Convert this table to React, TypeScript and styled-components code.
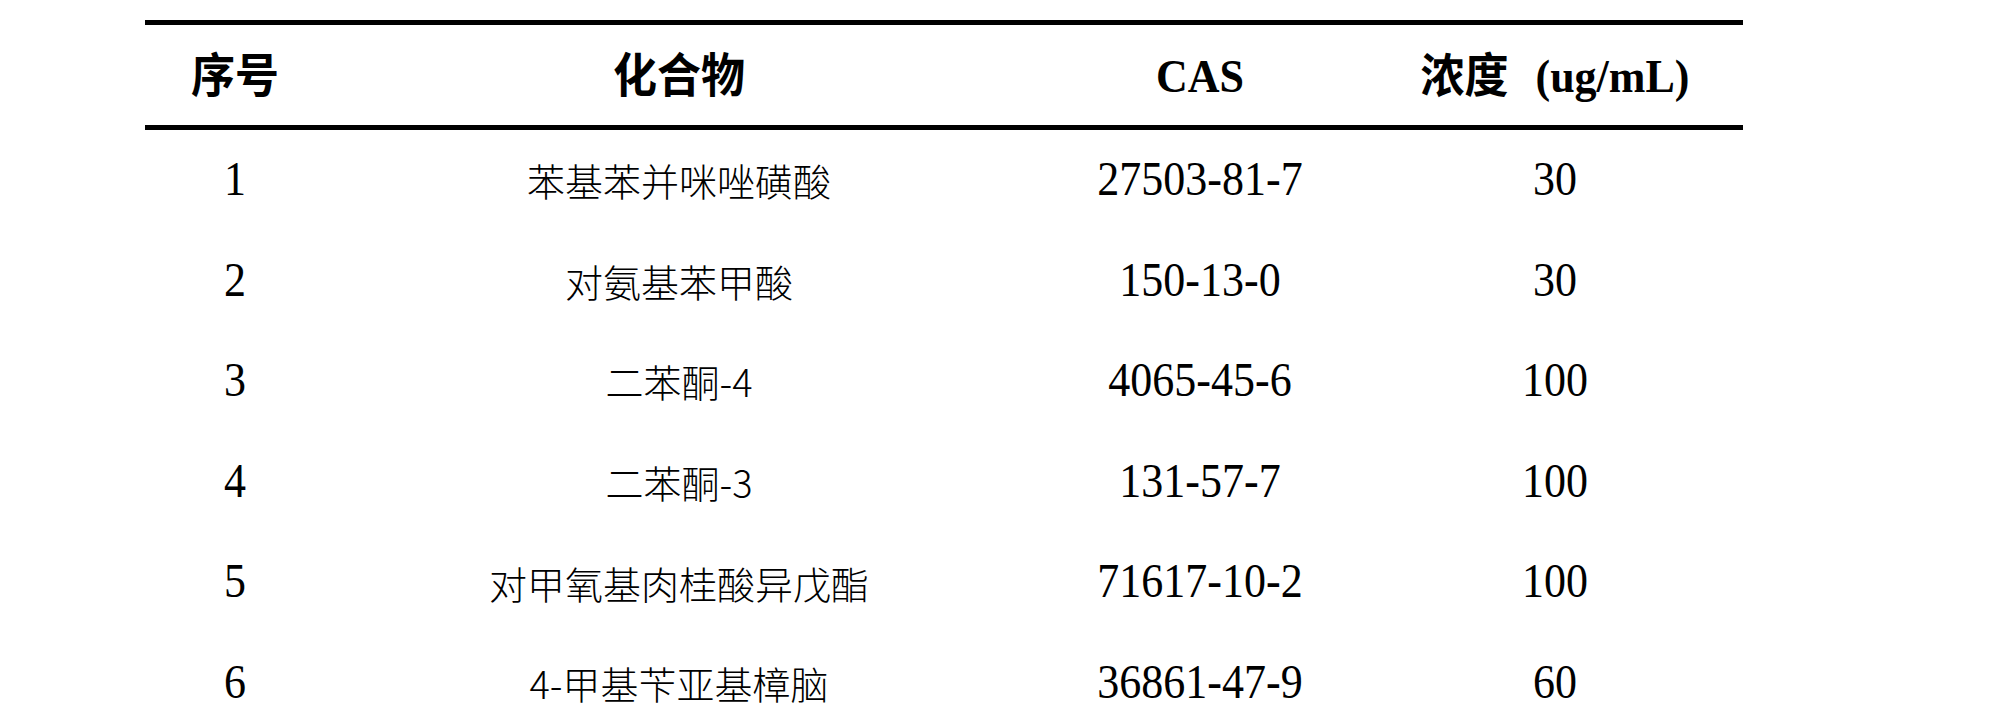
import React from 'react'
import styled, { createGlobalStyle } from 'styled-components'

const GlobalStyle = createGlobalStyle`
  html, body {
    margin: 0;
    padding: 0;
    background: #ffffff;
  }
  body {
    font-family: "Liberation Serif", "Noto Sans CJK SC", serif;
    color: #000000;
  }
`

const COLUMNS = '180px 708px 334px 376px'

const compounds = [
  { no: 1, name: '苯基苯并咪唑磺酸', cas: '27503-81-7', conc: 30 },
  { no: 2, name: '对氨基苯甲酸', cas: '150-13-0', conc: 30 },
  { no: 3, name: '二苯酮-4', cas: '4065-45-6', conc: 100 },
  { no: 4, name: '二苯酮-3', cas: '131-57-7', conc: 100 },
  { no: 5, name: '对甲氧基肉桂酸异戊酯', cas: '71617-10-2', conc: 100 },
  { no: 6, name: '4-甲基苄亚基樟脑', cas: '36861-47-9', conc: 60 },
]

export default function App() {
  return (
    <>
      <GlobalStyle />
      <Page>
        <Table>
          <HeaderRow>
            <HeadCell>序号</HeadCell>
            <HeadCell>化合物</HeadCell>
            <HeadCell>CAS</HeadCell>
            <HeadCell>
              浓度<Unit>(ug/mL)</Unit>
            </HeadCell>
          </HeaderRow>
          {compounds.map(c => (
            <BodyRow key={c.no}>
              <NumCell>{c.no}</NumCell>
              <NameCell>{c.name}</NameCell>
              <NumCell>{c.cas}</NumCell>
              <NumCell>{c.conc}</NumCell>
            </BodyRow>
          ))}
        </Table>
      </Page>
    </>
  )
}

const Page = styled.div`
  padding: 20px 0 0 145px;
`

const Table = styled.div`
  width: 1598px;
`

const HeaderRow = styled.div`
  display: grid;
  grid-template-columns: ${COLUMNS};
  height: 100px;
  border-top: 5px solid #000;
  border-bottom: 5px solid #000;
`

const BodyRow = styled.div`
  display: grid;
  grid-template-columns: ${COLUMNS};
  height: 100.6px;
`

const Cell = styled.div`
  display: flex;
  align-items: center;
  justify-content: center;
  line-height: 1;
  white-space: nowrap;
`

const HeadCell = styled(Cell)`
  padding-top: 4px;
  font-size: 44px;
  font-weight: 700;
  transform: scaleY(1.06);
`

const Unit = styled.span`
  margin-left: 27px;
`

const NumCell = styled(Cell)`
  font-size: 44px;
  transform: scaleY(1.08);
`

const NameCell = styled(Cell)`
  font-family: "Noto Sans CJK SC", "Liberation Sans", sans-serif;
  font-size: 38px;
  font-weight: 300;
`
